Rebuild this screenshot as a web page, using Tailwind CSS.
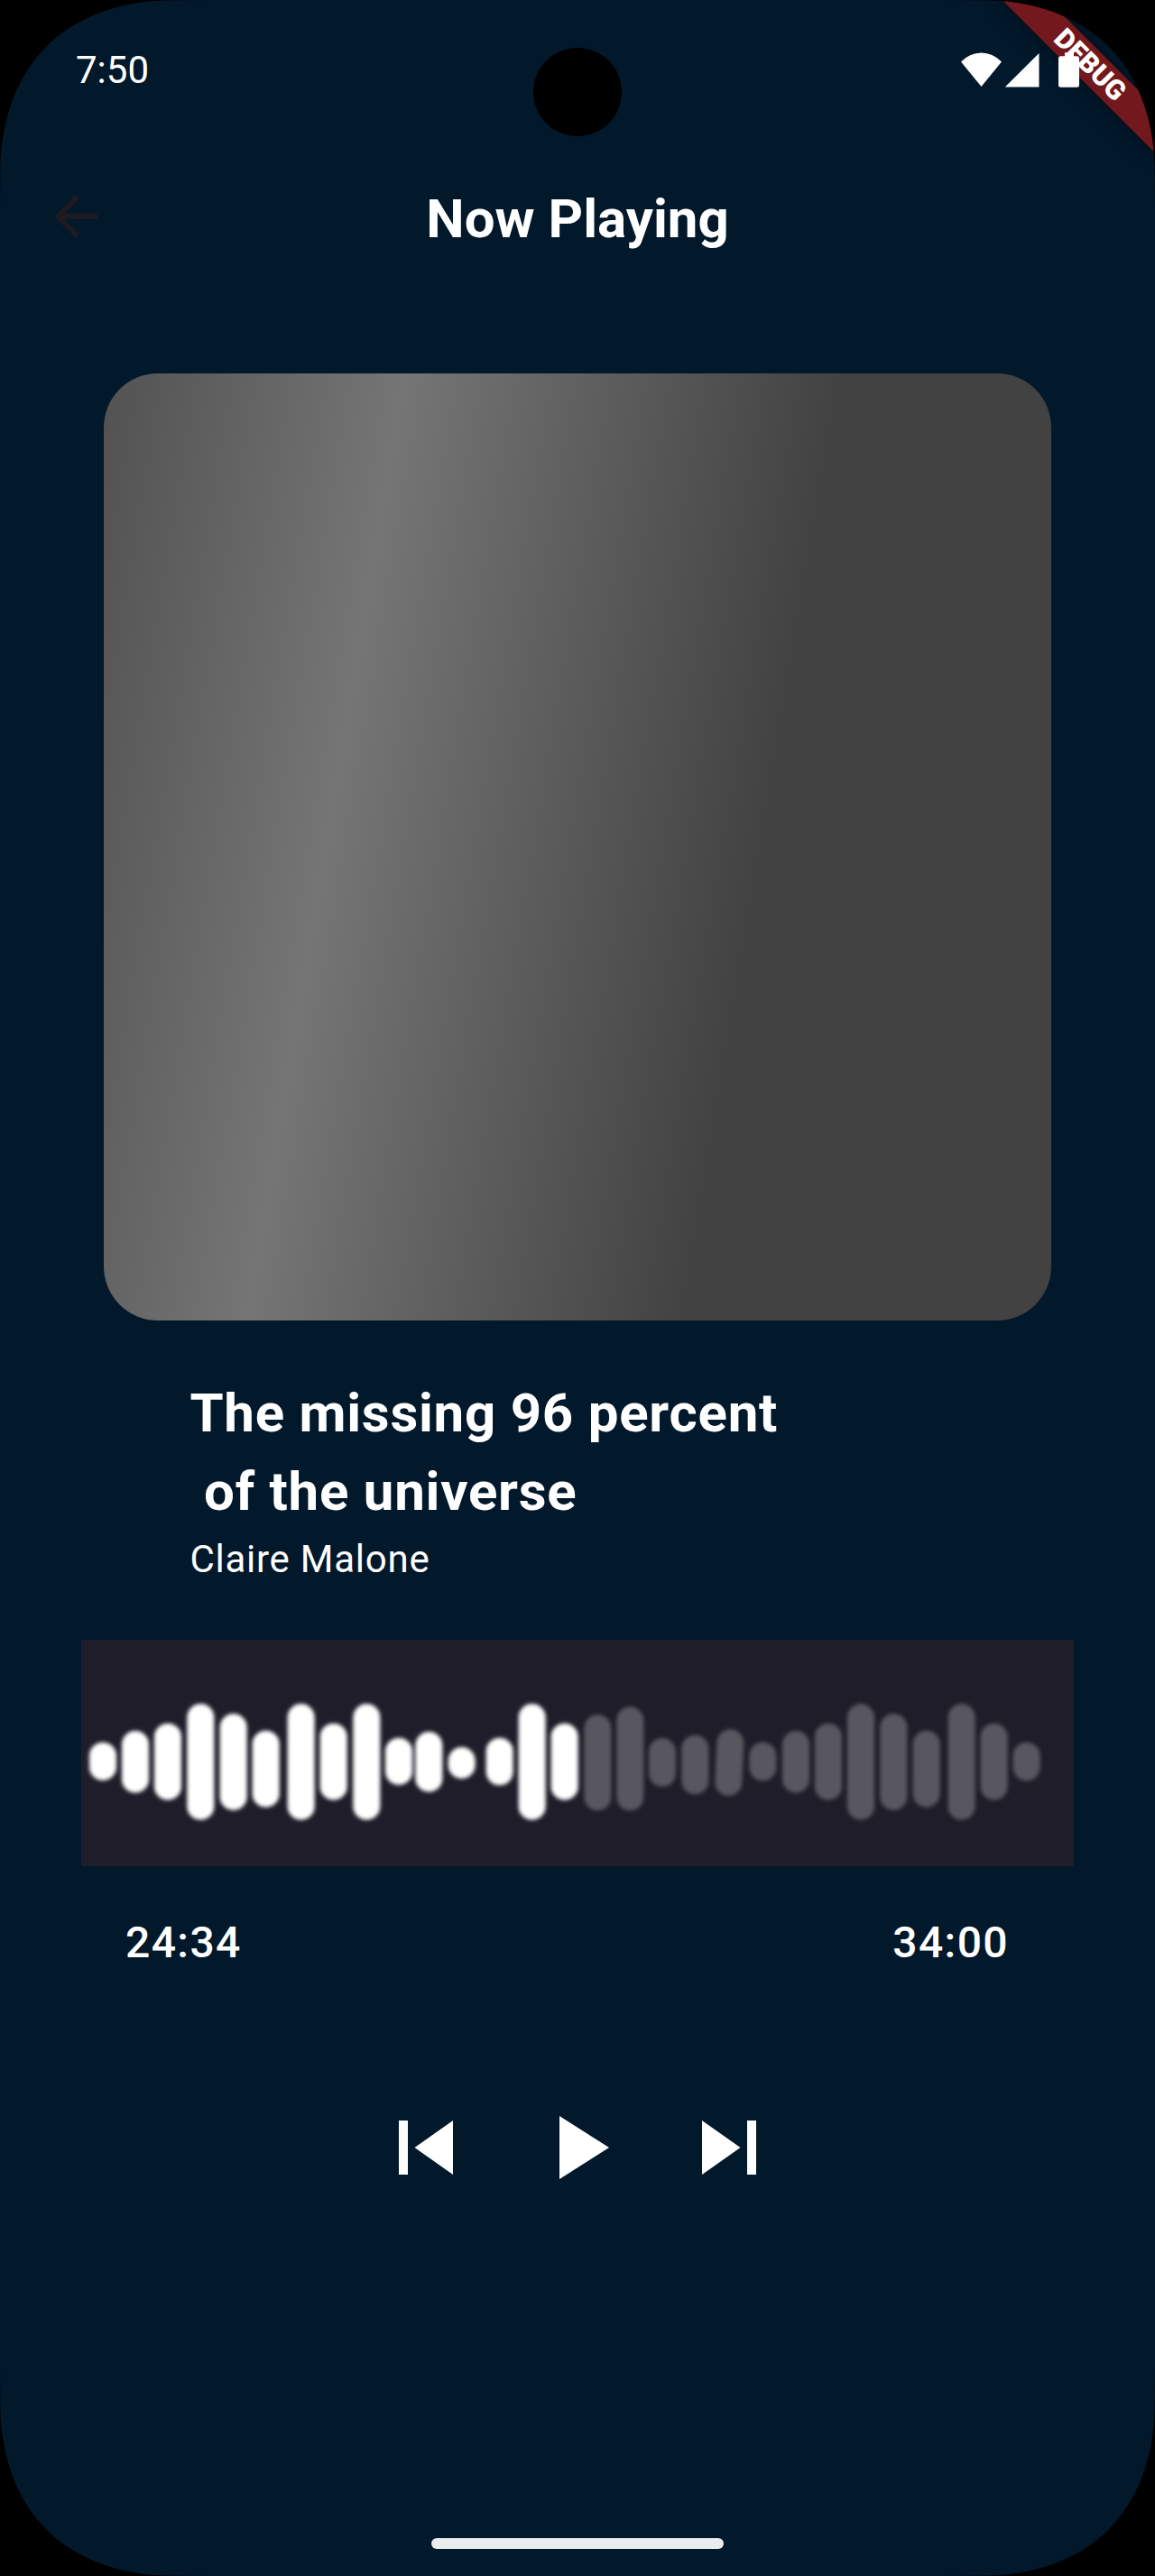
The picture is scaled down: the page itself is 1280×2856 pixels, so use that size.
<!DOCTYPE html>
<html lang="en">
<head>
<meta charset="utf-8">
<title>Now Playing</title>
<script src="https://cdn.jsdelivr.net/npm/@tailwindcss/browser@4"></script>
</head>
<body class="bg-black">
<div class="relative flex h-[2856px] w-[1280px] flex-col overflow-hidden bg-[#02182b] font-[Roboto,sans-serif] text-white">

  <!-- debug ribbon -->
  <div class="absolute left-[1088px] top-[54px] flex h-9 w-60 rotate-45 items-center justify-center bg-[#73181c] text-[30.6px] leading-none font-black shadow-[0_0_18px_rgba(0,0,0,0.5)]">DEBUG</div>

  <!-- camera cutout -->
  <div class="absolute left-[591px] top-[53px] size-[98px] rounded-full bg-black"></div>

  <!-- status bar -->
  <div class="relative flex h-[156px] shrink-0 items-center justify-between pr-[84px] pl-[84px]">
    <span class="text-[42px] leading-[156px] font-normal">7:50</span>
    <svg class="h-[156px] w-[132px]" viewBox="1064 0 132 156" fill="#fff">
      <path d="M1087.5 96 1065 68.5Q1075 58.5 1087.5 58.5T1110 68.5Z"/>
      <path d="M1113.8 96.6 1151.5 59V96.6Z"/>
      <path d="M1180 58.3h10v4h3.500q2.500 0 2.500 2.500v29.500q0 2.500-2.500 2.500h-18q-2.500 0-2.500-2.500v-29.500q0-2.500 2.500-2.500h4.500z"/>
    </svg>
  </div>

  <!-- app bar -->
  <header class="grid h-[168px] shrink-0 grid-cols-[1fr_auto_1fr] items-center px-12">
    <svg class="size-[72px]" viewBox="0 0 24 24" fill="#1d1b20"><path d="M20 11H7.83l5.59-5.59L12 4l-8 8 8 8 1.410-1.410L7.830 13H20v-2z"/></svg>
    <h1 class="pt-1.5 text-[60px] leading-[72px] font-bold">Now Playing</h1>
    <span></span>
  </header>

  <main class="flex flex-col">
    <div class="mt-[90px] size-[1050px] self-center rounded-[60px] bg-[linear-gradient(99.462deg,#424242_-150px,#757575_329px,#424242_808px)]"></div>

    <div class="mt-[59px] pl-[210.4px] tracking-[0.75px]">
      <h2 class="text-[60px] leading-[87px] font-bold whitespace-pre">The missing 96 percent
 of the universe</h2>
      <p class="text-[42px] leading-[63px]">Claire Malone</p>
    </div>

    <div class="mt-[58px] h-[251px] w-[1100px] self-center bg-[#1f1d29]">
      <svg class="size-full" viewBox="0 0 3300 753" preserveAspectRatio="none" fill="none" stroke-width="90" stroke-linecap="round">
        <defs><filter id="soft" filterUnits="userSpaceOnUse" x="0" y="0" width="3300" height="753"><feGaussianBlur stdDeviation="6"/></filter></defs>
        <path filter="url(#soft)" stroke="#fff" d="M72 386V423M180 348V464M288 323V488M397 258V554M506 291V522M614 347V512M731 258V554M839 323V488M949 258V554M1056 371V438M1156 351V461M1265 402V417M1391 371V439M1499 258V554M1607 323V488"/>
        <path filter="url(#soft)" stroke="#59575e" d="M1717 294V523M1825 268V523M1932 372V444M2041 362V469M2158 343L2152 474M2266 386V424M2376 348V464M2484 323V488M2592 258V554M2701 291V522M2810 347V512M2927 258V554M3035 323V488M3143 386V424"/>
      </svg>
    </div>

    <div class="mt-[49px] flex justify-between pr-[162px] pl-[139px] text-[48px] leading-[72px] font-medium tracking-[1.4px]">
      <span>24:34</span>
      <span>34:00</span>
    </div>

    <div class="mt-[131px] flex justify-center gap-12">
      <svg class="size-[120px]" viewBox="0 0 24 24" fill="#fff"><path d="M6 6h2v12H6zm3.500 6l8.500 6V6z"/></svg>
      <svg class="size-[120px]" viewBox="0 0 24 24" fill="#fff"><path d="M8 5v14l11-7z"/></svg>
      <svg class="size-[120px]" viewBox="0 0 24 24" fill="#fff"><path d="M6 18l8.500-6L6 6v12zM16 6v12h2V6h-2z"/></svg>
    </div>
  </main>

  <div class="mt-auto mb-[30px] h-3 w-[324px] self-center rounded-full bg-[#ebecee]"></div>

  <!-- rounded display corners -->
  <svg class="absolute inset-0 size-full" viewBox="0 0 1280 2856">
    <defs><path id="corner" d="M0 0H230L190 .3C138 .5 87 16 51.500 51.500C16 87 .5 138 .3 190L0 230Z"/></defs>
    <use href="#corner"/>
    <use href="#corner" transform="matrix(-1 0 0 1 1280 0)"/>
    <use href="#corner" transform="matrix(1 0 0 -1 0 2856)"/>
    <use href="#corner" transform="matrix(-1 0 0 -1 1280 2856)"/>
  </svg>
</div>
</body>
</html>
